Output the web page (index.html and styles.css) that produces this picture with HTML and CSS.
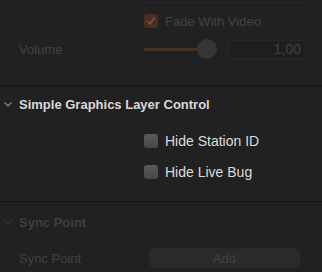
FILE: index.html
```html
<!DOCTYPE html>
<html lang="en">

<head>
  <meta charset="UTF-8" />
  <title>Inspector</title>
  <link rel="stylesheet" href="styles.css">
</head>

<body>

  <div class="section audio">
    <div class="field-stub"></div>

    <div class="row check-row">
      <div class="label"></div>
      <div class="control">
        <span class="box checked">
          <svg width="10" height="10" viewBox="0 0 10 10"><polyline points="1.5,5.2 4,7.8 8.6,1.8" /></svg>
        </span>
        <span class="check-text">Fade With Video</span>
      </div>
    </div>

    <div class="row">
      <div class="label">Volume</div>
      <div class="control">
        <div class="slider">
          <div class="track"></div>
          <div class="knob"></div>
        </div>
        <div class="number">1,00</div>
      </div>
    </div>
  </div>

  <div class="section graphics">
    <div class="header">
      <svg class="chevron" width="8" height="5" viewBox="0 0 8 5"><polyline points="0.5,0.5 4,4 7.5,0.5" /></svg>
      <span>Simple Graphics Layer Control</span>
    </div>

    <div class="row option first">
      <div class="label"></div>
      <div class="control">
        <span class="box"></span>
        <span class="check-text">Hide Station ID</span>
      </div>
    </div>

    <div class="row option">
      <div class="label"></div>
      <div class="control">
        <span class="box"></span>
        <span class="check-text">Hide Live Bug</span>
      </div>
    </div>
  </div>

  <div class="section sync">
    <div class="header">
      <svg class="chevron" width="8" height="5" viewBox="0 0 8 5"><polyline points="0.5,0.5 4,4 7.5,0.5" /></svg>
      <span>Sync Point</span>
    </div>

    <div class="row">
      <div class="label">Sync Point</div>
      <div class="control">
        <button class="add-btn">Add</button>
      </div>
    </div>
  </div>

</body>

</html>
```

FILE: styles.css
```css
body {
  margin: 0;
  width: 322px;
  height: 272px;
  overflow: hidden;
  background: #212121;
  font-family: 'Liberation Sans', Arial, sans-serif;
  font-size: 13px;
  color: #434343;
}

.section {
  box-sizing: border-box;
  border-bottom: 1px solid #161616;
}

.row {
  display: flex;
  align-items: center;
  height: 28px;
}

.label {
  width: 144px;
  box-sizing: border-box;
  padding-left: 19px;
  flex-shrink: 0;
}

.control {
  display: flex;
  align-items: center;
}

.box {
  width: 14px;
  height: 14px;
  border-radius: 3px;
  box-sizing: border-box;
  background: linear-gradient(#5a5a5a, #474747);
  display: flex;
  align-items: center;
  justify-content: center;
}

.check-text {
  margin-left: 7px;
}

/* top section, dimmed */
.audio {
  height: 86px;
}

.field-stub {
  margin-left: 144px;
  width: 162px;
  height: 2px;
  border-bottom: 1px solid #282828;
  margin-bottom: 4px;
}

.audio .box.checked {
  background: #4a2f1f;
}

.box svg polyline {
  fill: none;
  stroke: #75594a;
  stroke-width: 1.6;
}

.slider {
  position: relative;
  width: 73px;
  height: 20px;
}

.track {
  position: absolute;
  left: 0;
  top: 9px;
  width: 56px;
  height: 3px;
  border-radius: 2px;
  background: #46301f;
}

.knob {
  position: absolute;
  left: 53px;
  top: 0;
  width: 20px;
  height: 20px;
  border-radius: 50%;
  background: #363636;
}

.number {
  margin-left: 11px;
  width: 78px;
  height: 19px;
  box-sizing: border-box;
  border: 1px solid #262626;
  background: #1e1e1e;
  text-align: right;
  padding-right: 4px;
  line-height: 17px;
  font-size: 14px;
  color: #404040;
}

/* headers */
.header {
  display: flex;
  align-items: center;
  height: 28px;
  font-weight: bold;
}

.chevron {
  margin-left: 4px;
  margin-right: 7px;
}

.chevron polyline {
  fill: none;
  stroke-width: 1.2;
}

/* middle section, active */
.graphics {
  height: 116px;
  padding-top: 4px;
  color: #dcdcdc;
}

.graphics .header {
  color: #d8d8d8;
}

.graphics .chevron polyline {
  stroke: #8a8a8a;
}

.option {
  height: 31px;
  font-size: 14px;
}

.option.first {
  margin-top: 7px;
}

/* bottom section, dimmed */
.sync {
  padding-top: 6px;
  border-bottom: none;
}

.sync .header {
  color: #3e3e3e;
}

.sync .chevron polyline {
  stroke: #363636;
}

.sync .row {
  margin-top: 8px;
}

.add-btn {
  margin-left: 5px;
  width: 151px;
  height: 20px;
  border: none;
  border-radius: 6px;
  background: #2a2a2a;
  color: #424242;
  font-family: inherit;
  font-size: 13px;
  padding: 0;
}
```
